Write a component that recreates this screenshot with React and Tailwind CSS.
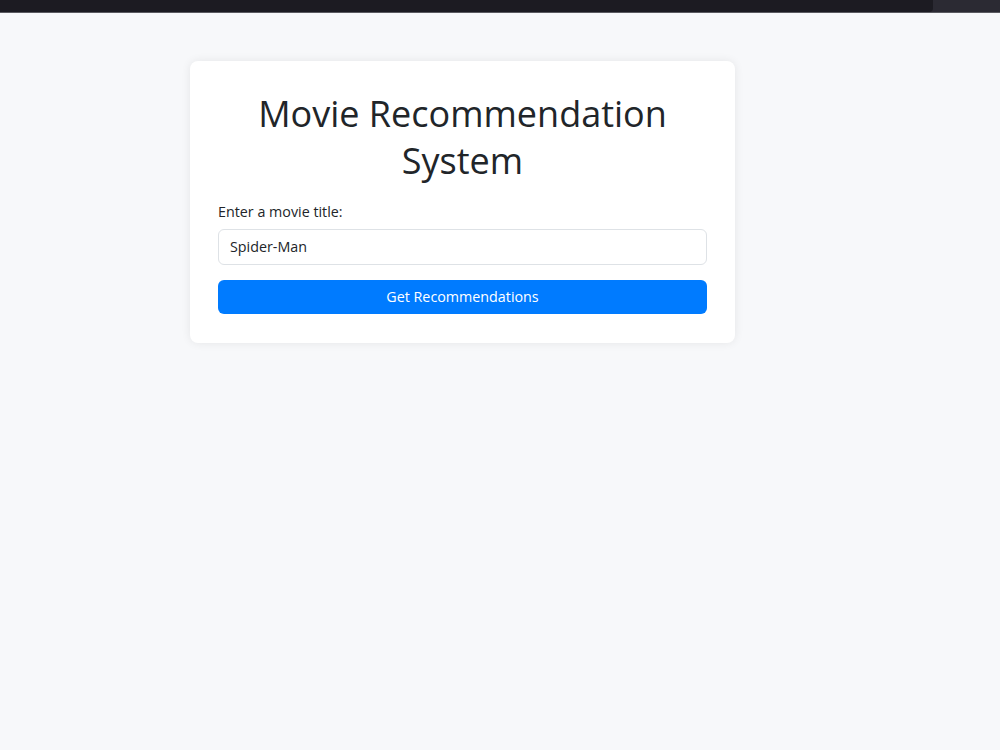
export default function App() {
  return (
    <div className="min-h-[750px] w-full bg-[#f7f8fa] flex flex-col" style={{ fontFamily: '"Open Sans", "Noto Sans", sans-serif' }}>
      <div className="h-[12px] flex bg-[#2b2a33]">
        <div className="flex-1 bg-[#1c1b22] rounded-br-[4px]" />
        <div className="w-[67px]" />
      </div>
      <div className="h-px bg-[#5a5a60]" />
      <div className="flex pl-[190px] pt-[48px]">
        <div className="w-[545px] bg-white rounded-[8px] shadow-[0_0_10px_rgba(0,0,0,0.08)] px-[28px] pt-[29px] pb-[29px] text-[#212529]">
          <h1 className="text-center text-[36px] leading-[47px] font-normal">Movie Recommendation System</h1>
          <label className="block mt-[17px] text-[14.3px] leading-[22px]">Enter a movie title:</label>
          <div className="mt-[6px] h-[36px] border border-[#dee2e6] rounded-[6px] flex items-center px-[11px] text-[14.3px]">Spider-Man</div>
          <button className="mt-[15px] w-full h-[34px] bg-[#007bff] text-white rounded-[6px] text-[14.3px]">Get Recommendations</button>
        </div>
      </div>
    </div>
  );
}
